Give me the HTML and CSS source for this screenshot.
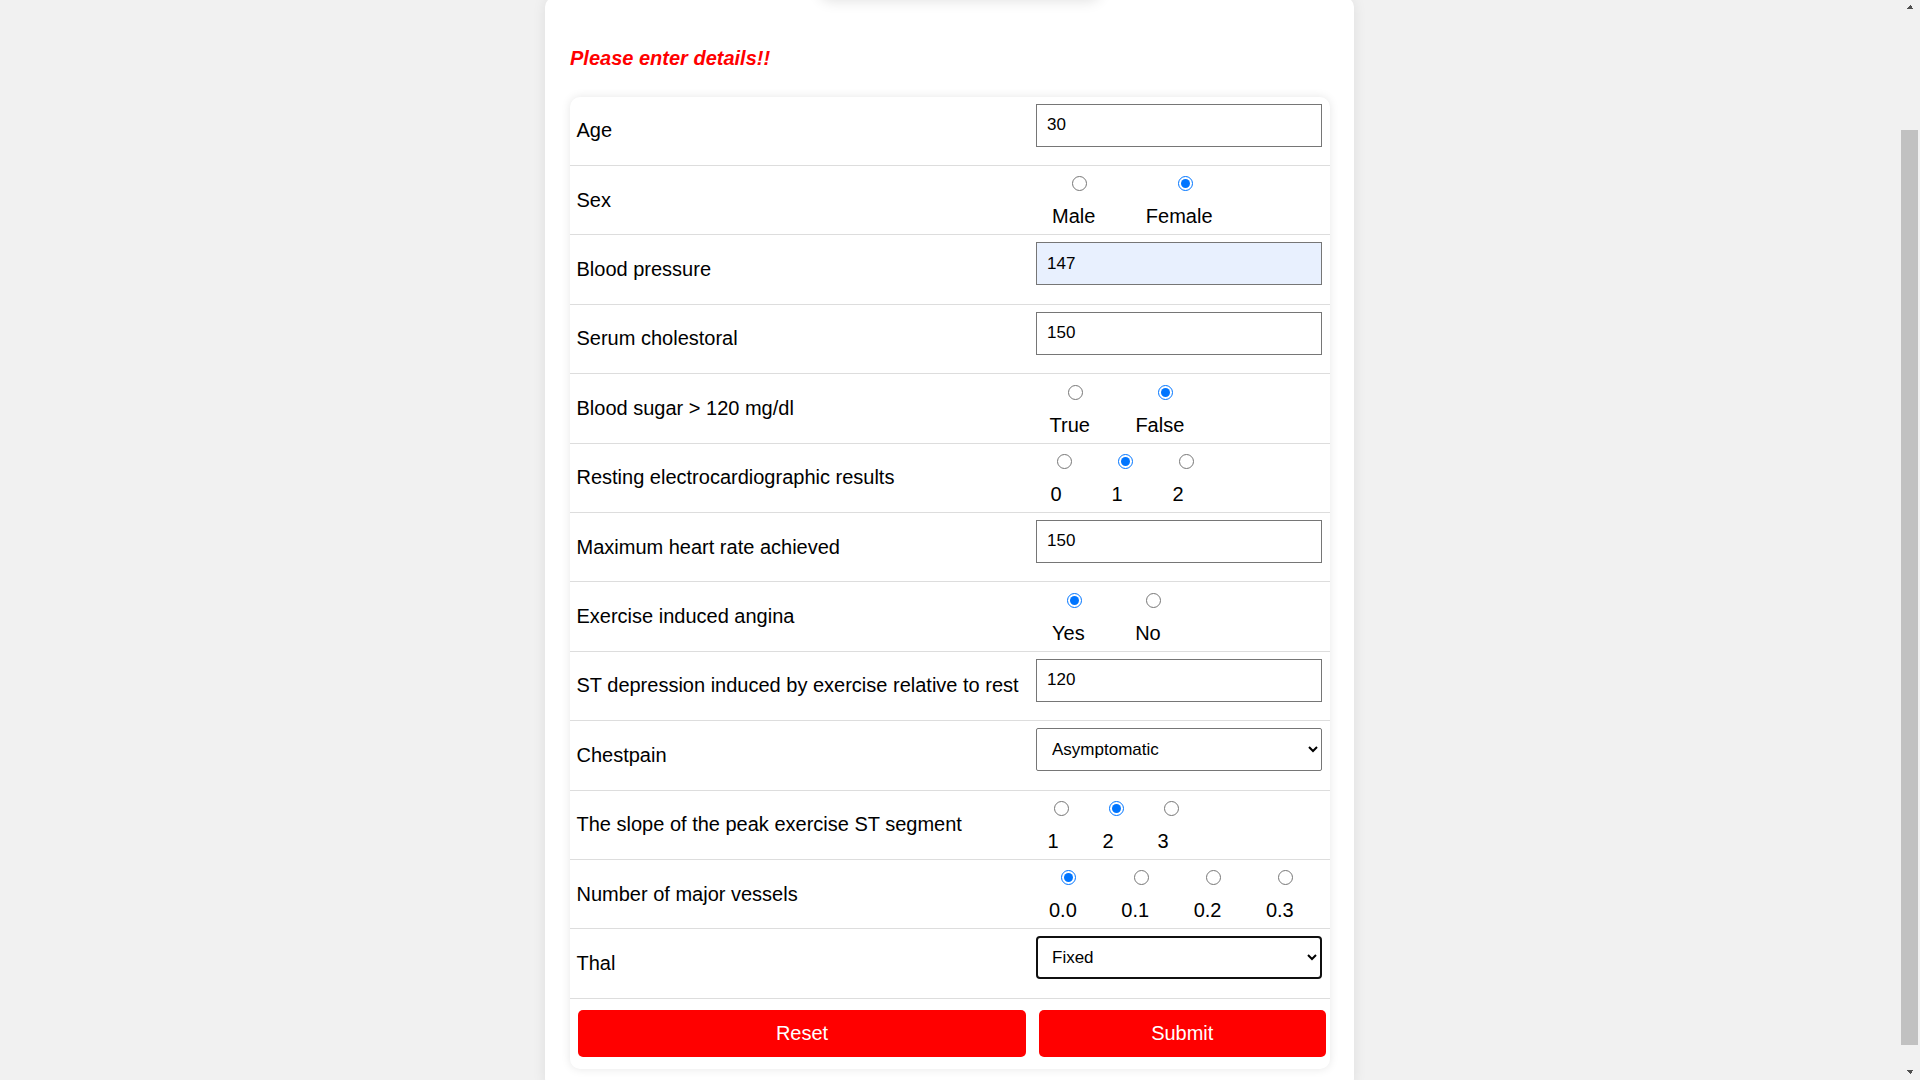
FILE: index.html
```html
<!DOCTYPE html>
<html lang="en">
<head>
<meta charset="utf-8">
<title>Heart Disease Prediction</title>
<link rel="stylesheet" href="styles.css">
</head>
<body>
<div class="page">
  <div class="banner" aria-hidden="true"></div>
  <main class="card">
    <h2 class="notice">Please enter details!!</h2>
    <form class="form">
      <div class="row">
        <label class="label" for="age">Age</label>
        <div class="cell"><input class="field" id="age" type="text" value="30"></div>
      </div>
      <div class="row">
        <span class="label">Sex</span>
        <div class="choices g-sex">
          <label class="opt"><input type="radio" name="sex"><span class="opt-text">Male</span></label>
          <label class="opt"><input type="radio" name="sex" checked><span class="opt-text">Female</span></label>
        </div>
      </div>
      <div class="row">
        <label class="label" for="bp">Blood pressure</label>
        <div class="cell"><input class="field field-autofill" id="bp" type="text" value="147"></div>
      </div>
      <div class="row">
        <label class="label" for="chol">Serum cholestoral</label>
        <div class="cell"><input class="field" id="chol" type="text" value="150"></div>
      </div>
      <div class="row">
        <span class="label">Blood sugar &gt; 120 mg/dl</span>
        <div class="choices g-sugar">
          <label class="opt"><input type="radio" name="fbs"><span class="opt-text">True</span></label>
          <label class="opt"><input type="radio" name="fbs" checked><span class="opt-text">False</span></label>
        </div>
      </div>
      <div class="row">
        <span class="label">Resting electrocardiographic results</span>
        <div class="choices g-ecg">
          <label class="opt"><input type="radio" name="ecg"><span class="opt-text">0</span></label>
          <label class="opt"><input type="radio" name="ecg" checked><span class="opt-text">1</span></label>
          <label class="opt"><input type="radio" name="ecg"><span class="opt-text">2</span></label>
        </div>
      </div>
      <div class="row">
        <label class="label" for="hr">Maximum heart rate achieved</label>
        <div class="cell"><input class="field" id="hr" type="text" value="150"></div>
      </div>
      <div class="row">
        <span class="label">Exercise induced angina</span>
        <div class="choices g-angina">
          <label class="opt"><input type="radio" name="exang" checked><span class="opt-text">Yes</span></label>
          <label class="opt"><input type="radio" name="exang"><span class="opt-text">No</span></label>
        </div>
      </div>
      <div class="row">
        <label class="label" for="st">ST depression induced by exercise relative to rest</label>
        <div class="cell"><input class="field" id="st" type="text" value="120"></div>
      </div>
      <div class="row">
        <label class="label" for="cp">Chestpain</label>
        <div class="cell">
          <select class="field field-select" id="cp">
            <option>Typical angina</option>
            <option>Atypical angina</option>
            <option>Non-anginal pain</option>
            <option selected>Asymptomatic</option>
          </select>
        </div>
      </div>
      <div class="row">
        <span class="label">The slope of the peak exercise ST segment</span>
        <div class="choices g-slope">
          <label class="opt"><input type="radio" name="slope"><span class="opt-text">1</span></label>
          <label class="opt"><input type="radio" name="slope" checked><span class="opt-text">2</span></label>
          <label class="opt"><input type="radio" name="slope"><span class="opt-text">3</span></label>
        </div>
      </div>
      <div class="row">
        <span class="label">Number of major vessels</span>
        <div class="choices g-vessels">
          <label class="opt"><input type="radio" name="ca" checked><span class="opt-text">0.0</span></label>
          <label class="opt"><input type="radio" name="ca"><span class="opt-text">0.1</span></label>
          <label class="opt"><input type="radio" name="ca"><span class="opt-text">0.2</span></label>
          <label class="opt"><input type="radio" name="ca"><span class="opt-text">0.3</span></label>
        </div>
      </div>
      <div class="row">
        <label class="label" for="thal">Thal</label>
        <div class="cell">
          <select class="field field-select field-focus" id="thal">
            <option>Normal</option>
            <option selected>Fixed</option>
            <option>Reversible</option>
          </select>
        </div>
      </div>
      <div class="actions">
        <button class="btn btn-reset" type="reset">Reset</button>
        <button class="btn btn-submit" type="button">Submit</button>
      </div>
    </form>
  </main>
</div>
<div class="scrollbar" aria-hidden="true">
  <div class="sb-btn sb-up"></div>
  <div class="sb-track"><div class="sb-thumb"></div></div>
  <div class="sb-btn sb-down"></div>
</div>
<script src="script.js"></script>
</body>
</html>
```
FILE: styles.css
```css
html {
  background: #f1f1f1;
}
body {
  margin: 0;
  background: #f1f1f1;
  font-family: "Liberation Sans", Arial, sans-serif;
  color: #000;
}
.page {
  padding: 30px 21px 13px 0;
}
.banner {
  position: relative;
  z-index: 1;
  width: 280px;
  height: 102px;
  margin-left: calc(50% - 130px);
  background: #fff;
  border-radius: 10px;
  box-shadow: 0 4px 14px rgba(0, 0, 0, 0.12);
}
.card {
  display: block;
  width: 809px;
  box-sizing: border-box;
  margin: 0 auto;
  padding: 49.6px 24px 20px 25px;
  background: #fff;
  border-radius: 10px;
  box-shadow: 0 0 14px rgba(0, 0, 0, 0.08);
}
.notice {
  margin: 0 0 27px;
  font-size: 20px;
  line-height: 23px;
  font-weight: bold;
  font-style: italic;
  color: #f00;
}
.form {
  background: #fff;
  border-radius: 10px;
  box-shadow: 0 0 10px rgba(0, 0, 0, 0.1);
  overflow: hidden;
}
.row {
  display: grid;
  grid-template-columns: 466px 1fr;
  height: 69.4px;
  box-sizing: border-box;
  border-bottom: 1px solid #dddddd;
}
.label {
  align-self: center;
  padding-left: 6.5px;
  font-size: 20px;
  line-height: 23px;
}
.cell {
  align-self: start;
  padding-top: 7px;
}
.field {
  display: block;
  width: 286px;
  height: 43px;
  box-sizing: border-box;
  margin: 0;
  padding: 0 10px;
  border: 1px solid #767676;
  border-radius: 0;
  background: #fff;
  font-family: "Liberation Sans", Arial, sans-serif;
  font-size: 17px;
  color: #000;
  outline: none;
}
.field-autofill {
  background: #e8f0fe;
}
.field-select {
  padding: 0 13px 0 11px;
  border-radius: 2px;
}
.field-focus {
  border: 2px solid #101010;
  border-radius: 4px;
  padding-left: 10px;
  padding-right: 12px;
}
.choices {
  align-self: start;
  display: flex;
  padding-top: 10.5px;
}
.opt {
  display: grid;
  justify-items: start;
}
.opt input {
  justify-self: center;
  width: 15px;
  height: 15px;
  margin: 0 -6px 0 6px;
}
.opt-text {
  margin-top: 14px;
  font-size: 20px;
  line-height: 23px;
}
.g-sex { padding-left: 16px; gap: 50.5px; }
.g-sugar { padding-left: 13.5px; gap: 45.5px; }
.g-ecg { padding-left: 14.5px; gap: 46px; }
.g-angina { padding-left: 16px; gap: 50.5px; }
.g-slope { padding-left: 11.5px; gap: 40px; }
.g-vessels { padding-left: 13px; gap: 44.5px; }
.actions {
  display: grid;
  grid-template-columns: 466px 1fr;
  height: 70.3px;
  align-items: start;
}
.btn {
  height: 47.7px;
  margin-top: 11px;
  border: 0;
  border-radius: 5px;
  background: #f00;
  color: #fff;
  font-family: "Liberation Sans", Arial, sans-serif;
  font-size: 20px;
  cursor: pointer;
}
.btn-reset {
  margin-left: 8px;
  width: 448px;
}
.btn-submit {
  margin-left: 2.5px;
  width: 287.5px;
}
.scrollbar {
  position: fixed;
  top: 0;
  right: 0;
  bottom: 0;
  width: 20px;
  display: flex;
  flex-direction: column;
  background: #f1f1f1;
  z-index: 10;
}
.sb-btn {
  height: 17px;
  flex: none;
  background-repeat: no-repeat;
  background-size: 4px 4px;
}
.sb-up {
  background-image: linear-gradient(to top left, #505050 50%, transparent 50%), linear-gradient(to top right, #505050 50%, transparent 50%);
  background-position: 6px 5px, 10px 5px;
}
.sb-down {
  background-image: linear-gradient(to bottom left, #505050 50%, transparent 50%), linear-gradient(to bottom right, #505050 50%, transparent 50%);
  background-position: 6px 7px, 10px 7px;
}
.sb-track {
  flex: 1;
  padding: 113px 2px 0 1px;
}
.sb-thumb {
  height: 915px;
  background: #c1c1c1;
}
```
FILE: script.js
```js
window.scrollTo(0, 135);
```
